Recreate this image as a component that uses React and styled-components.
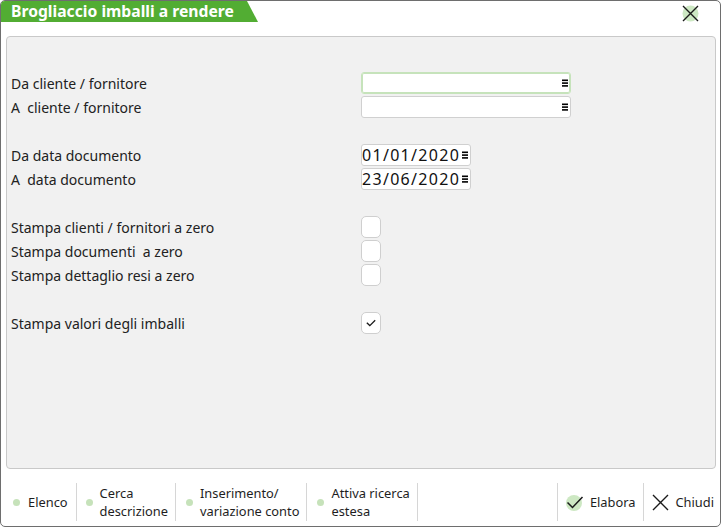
import React from "react";
import styled, { createGlobalStyle } from "styled-components";

const Global = createGlobalStyle`
  html, body { margin: 0; padding: 0; background: #ffffff; }
  body { font-family: "Noto Sans", "Open Sans", sans-serif; color: #1e1e1e; }
  * { box-sizing: border-box; }
`;

const Window = styled.div`
  width: 721px;
  height: 527px;
  border: 1px solid #6e6e6e;
  border-radius: 5px;
  background: #ffffff;
  display: flex;
  flex-direction: column;
  overflow: hidden;
`;

const Header = styled.div`
  height: 35px;
  display: flex;
  align-items: flex-start;
  justify-content: space-between;
  flex-shrink: 0;
`;

const Tab = styled.div`
  width: 257px;
  height: 21px;
  background: #52ad33;
  clip-path: polygon(0 0, 246px 0, 257px 100%, 0 100%);
  color: #ffffff;
  font-weight: 700;
  font-size: 15.7px;
  line-height: 21px;
  padding-left: 10px;
  white-space: nowrap;
`;

const CloseButton = styled.div`
  width: 18px;
  height: 18px;
  margin: 3px 21px 0 0;
  display: flex;
  align-items: center;
  justify-content: center;
`;

const Panel = styled.div`
  flex: 1;
  margin: 0 4px 0 5px;
  background: #f1f1f1;
  border: 1px solid #c9c9c9;
  border-radius: 4px;
  padding: 34px 0 0 4px;
`;

const Form = styled.div`
  display: grid;
  grid-template-columns: 350px auto;
  grid-auto-rows: 24px;
  align-items: center;
`;

const Spacer = styled.div`
  grid-column: 1 / span 2;
`;

const Label = styled.div`
  font-size: 14px;
  color: #222;
  white-space: nowrap;
`;

const Field = styled.div`
  width: ${(p) => p.$w}px;
  height: 22px;
  background: #ffffff;
  border: 1px solid ${(p) => (p.$focus ? "#c6e3bb" : "#d0d0d0")};
  box-shadow: ${(p) => (p.$focus ? "inset 0 0 0 1px #c6e3bb" : "none")};
  border-radius: 3px;
  display: flex;
  align-items: center;
  justify-content: space-between;
  padding: 0 2px 0 0;
`;

const DateText = styled.span`
  font-size: 16px;
  letter-spacing: 1.3px;
  color: #111;
  line-height: 20px;
`;

const Check = styled.div`
  width: 20px;
  height: 22px;
  background: #ffffff;
  border: 1px solid #cfcfcf;
  border-radius: 5px;
  display: flex;
  align-items: center;
  justify-content: center;
`;

const Footer = styled.div`
  height: 57px;
  flex-shrink: 0;
  display: flex;
  align-items: center;
  padding: 13px 0 4px 2px;
`;

const FootButton = styled.div`
  height: 38px;
  display: flex;
  align-items: center;
  gap: ${(p) => p.$gap ?? 7}px;
  padding: 0 ${(p) => p.$pr ?? 7}px 0 ${(p) => p.$pl ?? 9}px;
  font-size: 12.85px;
  line-height: 18px;
  color: #1e1e1e;
  white-space: nowrap;
`;

const Dot = styled.span`
  width: 7px;
  height: 7px;
  border-radius: 50%;
  background: #c6e2ba;
  flex-shrink: 0;
`;

const Divider = styled.div`
  width: 1px;
  height: 38px;
  background: #d6d6d6;
  flex-shrink: 0;
`;

const Grow = styled.div`
  flex: 1;
`;

const Lines = () => (
  <svg width="6" height="8" viewBox="0 0 6 8">
    <rect x="0" y="0.5" width="6" height="1.6" fill="#000" />
    <rect x="0" y="3.3" width="6" height="1.6" fill="#000" />
    <rect x="0" y="6.1" width="6" height="1.6" fill="#000" />
  </svg>
);

const XIcon = ({ circle }) => (
  <svg width="17" height="17" viewBox="0 0 17 17">
    {circle && <circle cx="8.5" cy="8.5" r="8" fill="#cde8c3" />}
    <path d="M1 1 L16 16 M16 1 L1 16" stroke="#1a1a1a" strokeWidth="1.4" fill="none" />
  </svg>
);

const CheckIcon = () => (
  <svg width="18" height="18" viewBox="0 0 18 18">
    <circle cx="8" cy="10" r="8" fill="#cde8c3" />
    <path d="M1.5 9.5 L6.5 14.5 L16.5 4" stroke="#1a1a1a" strokeWidth="1.5" fill="none" />
  </svg>
);

const SmallCheck = () => (
  <svg width="10" height="8" viewBox="0 0 10 8">
    <path d="M0.8 3.8 L3.8 6.6 L9.2 1.2" stroke="#1a1a1a" strokeWidth="1.3" fill="none" />
  </svg>
);

export default function App() {
  return (
    <>
      <Global />
      <Window>
        <Header>
          <Tab>Brogliaccio imballi a rendere</Tab>
          <CloseButton>
            <XIcon circle />
          </CloseButton>
        </Header>
        <Panel>
          <Form>
            <Label>Da cliente / fornitore</Label>
            <Field $w={210} $focus>
              <span />
              <Lines />
            </Field>
            <Label>A&nbsp; cliente / fornitore</Label>
            <Field $w={210}>
              <span />
              <Lines />
            </Field>
            <Spacer />
            <Label>Da data documento</Label>
            <Field $w={110}>
              <DateText>01/01/2020</DateText>
              <Lines />
            </Field>
            <Label>A&nbsp; data documento</Label>
            <Field $w={110}>
              <DateText>23/06/2020</DateText>
              <Lines />
            </Field>
            <Spacer />
            <Label>Stampa clienti / fornitori a zero</Label>
            <Check />
            <Label>Stampa documenti&nbsp; a zero</Label>
            <Check />
            <Label>Stampa dettaglio resi a zero</Label>
            <Check />
            <Spacer />
            <Label>Stampa valori degli imballi</Label>
            <Check>
              <SmallCheck />
            </Check>
          </Form>
        </Panel>
        <Footer>
          <FootButton $pl={10} $pr={8} $gap={8}>
            <Dot />
            <span>Elenco</span>
          </FootButton>
          <Divider />
          <FootButton>
            <Dot />
            <span>
              Cerca
              <br />
              descrizione
            </span>
          </FootButton>
          <Divider />
          <FootButton $pl={10}>
            <Dot />
            <span>
              Inserimento/
              <br />
              variazione conto
            </span>
          </FootButton>
          <Divider />
          <FootButton $pl={10}>
            <Dot />
            <span>
              Attiva ricerca
              <br />
              estesa
            </span>
          </FootButton>
          <Divider />
          <Grow />
          <Divider />
          <FootButton $gap={6} $pl={8} $pr={8}>
            <CheckIcon />
            <span>Elabora</span>
          </FootButton>
          <Divider />
          <FootButton $gap={6} $pl={8} $pr={6}>
            <XIcon />
            <span>Chiudi</span>
          </FootButton>
        </Footer>
      </Window>
    </>
  );
}
